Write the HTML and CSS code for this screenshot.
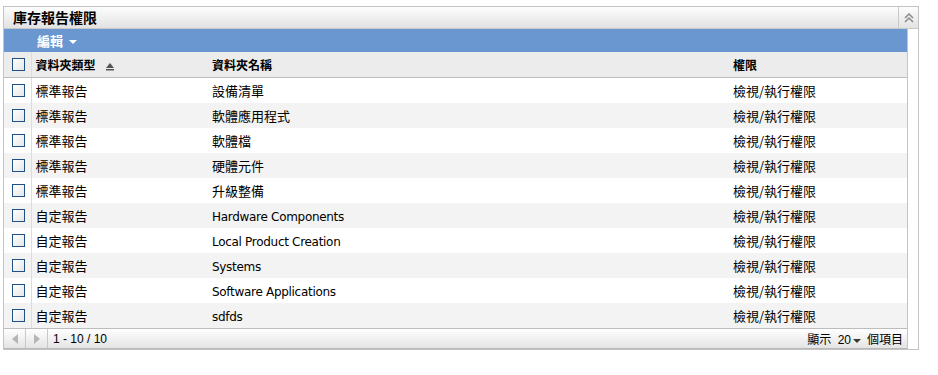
FILE: index.html
```html
<!DOCTYPE html>
<html lang="zh-Hant">
<head>
  <meta charset="UTF-8">
  <title>庫存報告權限</title>
  <link rel="stylesheet" href="styles.css">
</head>
<body>
  <div class="panel">
    <div class="panel-head">
      <h1>庫存報告權限</h1>
      <span class="collapse">
        <svg width="10" height="10" viewBox="0 0 10 10">
          <path d="M1 5 L5 1 L9 5 M1 9 L5 5 L9 9" fill="none" stroke="#8a8a8a" stroke-width="1.5"/>
        </svg>
      </span>
    </div>
    <div class="panel-body">
      <div class="grid">
        <div class="toolbar">
          <span class="menu">編輯 <span class="caret"></span></span>
        </div>
        <table>
          <colgroup>
            <col class="c-check">
            <col class="c-type">
            <col class="c-name">
            <col>
          </colgroup>
          <thead>
            <tr>
              <th><span class="box"></span></th>
              <th>資料夾類型
                <svg class="sort" width="8" height="8" viewBox="0 0 8 8">
                  <path d="M4 0 L8 5 L0 5 Z" fill="#555"/>
                  <rect x="0" y="6" width="8" height="1.5" fill="#555"/>
                </svg>
              </th>
              <th>資料夾名稱</th>
              <th>權限</th>
            </tr>
          </thead>
          <tbody>
            <tr><td><span class="box"></span></td><td>標準報告</td><td>設備清單</td><td>檢視/執行權限</td></tr>
            <tr><td><span class="box"></span></td><td>標準報告</td><td>軟體應用程式</td><td>檢視/執行權限</td></tr>
            <tr><td><span class="box"></span></td><td>標準報告</td><td>軟體檔</td><td>檢視/執行權限</td></tr>
            <tr><td><span class="box"></span></td><td>標準報告</td><td>硬體元件</td><td>檢視/執行權限</td></tr>
            <tr><td><span class="box"></span></td><td>標準報告</td><td>升級整備</td><td>檢視/執行權限</td></tr>
            <tr><td><span class="box"></span></td><td>自定報告</td><td><span class="en">Hardware Components</span></td><td>檢視/執行權限</td></tr>
            <tr><td><span class="box"></span></td><td>自定報告</td><td><span class="en">Local Product Creation</span></td><td>檢視/執行權限</td></tr>
            <tr><td><span class="box"></span></td><td>自定報告</td><td><span class="en">Systems</span></td><td>檢視/執行權限</td></tr>
            <tr><td><span class="box"></span></td><td>自定報告</td><td><span class="en">Software Applications</span></td><td>檢視/執行權限</td></tr>
            <tr><td><span class="box"></span></td><td>自定報告</td><td><span class="en">sdfds</span></td><td>檢視/執行權限</td></tr>
          </tbody>
        </table>
        <div class="footer">
          <span class="nav">
            <svg width="6" height="10" viewBox="0 0 6 10"><path d="M6 0 L0 5 L6 10 Z" fill="#b5b5b5"/></svg>
          </span>
          <span class="nav">
            <svg width="6" height="10" viewBox="0 0 6 10"><path d="M0 0 L6 5 L0 10 Z" fill="#b5b5b5"/></svg>
          </span>
          <span class="count">1 - 10 / 10</span>
          <span class="pager">顯示 <span class="size">20</span><span class="caret dark"></span>個項目</span>
        </div>
      </div>
    </div>
  </div>
</body>
</html>
```

FILE: styles.css
```css
body {
  margin: 0;
  font-family: "Noto Sans CJK TC", sans-serif;
  font-size: 13px;
  color: #000;
  background: #fff;
}

.panel {
  width: 914px;
  height: 342px;
  margin: 6px 0 0 3px;
  border: 1px solid #c4c4c4;
}

.panel-head {
  display: flex;
  align-items: stretch;
  height: 21px;
  background: linear-gradient(#fdfdfd, #e2e2e2);
  border-bottom: 1px solid #c8c8c8;
}
.panel-head h1 {
  flex: 1;
  margin: 0;
  padding-left: 9px;
  font-size: 14px;
  font-weight: bold;
  line-height: 21px;
}
.collapse {
  width: 19px;
  display: flex;
  align-items: center;
  justify-content: center;
  border-left: 1px solid #c8c8c8;
}

.panel-body {
  padding-right: 10px;
}
.grid {
  border-right: 1px solid #c4c4c4;
  border-bottom: 1px solid #b8b8b8;
}

.toolbar {
  height: 23px;
  background: #6a97cf;
  display: flex;
  align-items: center;
  padding-left: 33px;
}
.menu {
  color: #fff;
  font-weight: bold;
  font-size: 13px;
}
.caret {
  display: inline-block;
  width: 0;
  height: 0;
  margin-left: 3px;
  vertical-align: middle;
  border-left: 4px solid transparent;
  border-right: 4px solid transparent;
  border-top: 4px solid #fff;
}
.caret.dark {
  border-top-color: #3a3a2a;
  margin: 0 6px 0 2px;
}

table {
  width: 100%;
  border-collapse: collapse;
  table-layout: fixed;
}
.c-check { width: 27px; }
.c-type { width: 177px; }
.c-name { width: 521px; }

th, td {
  height: 25px;
  padding: 0 4px;
  text-align: left;
  white-space: nowrap;
}
th {
  font-size: 12px;
  font-weight: bold;
  background: #ececec;
  border-bottom: 1px solid #bdbdbd;
}
th:first-child, td:first-child {
  padding: 0 0 0 8px;
  border-right: 1px solid #dcdcdc;
}
tbody tr:nth-child(even) td {
  background: #f3f3f3;
}
.en {
  font-family: "DejaVu Sans", sans-serif;
  font-size: 12px;
  letter-spacing: -0.3px;
}
.sort {
  margin-left: 8px;
  vertical-align: -1px;
}

.box {
  display: block;
  width: 11px;
  height: 11px;
  border: 1px solid #1f5084;
  background: linear-gradient(135deg, #fff, #e6e6e6);
}

.footer {
  display: flex;
  align-items: center;
  height: 19px;
  border-top: 1px solid #bdbdbd;
  background: linear-gradient(#ffffff, #e4e4e4);
  font-family: "Liberation Sans", "Noto Sans CJK TC", sans-serif;
  font-size: 12px;
}
.nav {
  width: 21px;
  height: 19px;
  display: flex;
  align-items: center;
  justify-content: center;
  border-right: 1px solid #c8c8c8;
}
.count {
  padding-left: 5px;
  flex: 1;
}
.pager {
  padding-right: 4px;
}
.size {
  margin-left: 3px;
}
```
